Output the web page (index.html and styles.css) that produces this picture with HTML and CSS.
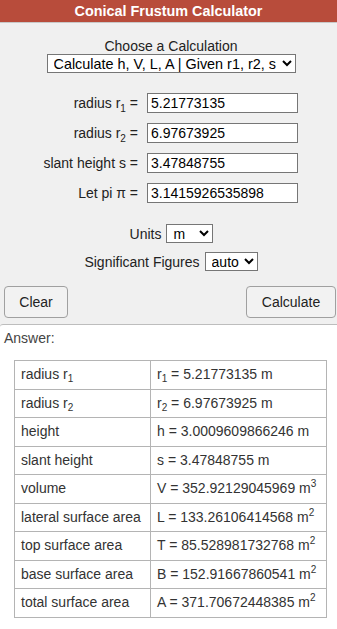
FILE: index.html
```html
<!DOCTYPE html>
<html>
<head>
<meta charset="utf-8">
<link rel="stylesheet" href="styles.css">
</head>
<body>
<div class="header">Conical Frustum Calculator</div>
<div class="form">
  <div class="choose">
    <div class="choose-label">Choose a Calculation</div>
    <select class="calc-select">
      <option>Calculate h, V, L, A | Given r1, r2, s</option>
    </select>
  </div>
  <div class="fields">
    <label class="lbl">radius r<sub>1</sub> =</label>
    <input class="inp" type="text" value="5.21773135">
    <label class="lbl">radius r<sub>2</sub> =</label>
    <input class="inp" type="text" value="6.97673925">
    <label class="lbl">slant height s =</label>
    <input class="inp" type="text" value="3.47848755">
    <label class="lbl">Let pi π =</label>
    <input class="inp" type="text" value="3.1415926535898">
  </div>
  <div class="opt-row units-row">Units <select class="sel-units"><option>m</option></select></div>
  <div class="opt-row sig-row">Significant Figures <select class="sel-sig"><option>auto</option></select></div>
  <div class="buttons">
    <button class="btn btn-clear">Clear</button>
    <button class="btn btn-calc">Calculate</button>
  </div>
</div>
<div class="answer">
  <div class="answer-title">Answer:</div>
  <table class="results">
    <tr><td class="c1">radius r<sub>1</sub></td><td>r<sub>1</sub> = 5.21773135 m</td></tr>
    <tr><td class="c1">radius r<sub>2</sub></td><td>r<sub>2</sub> = 6.97673925 m</td></tr>
    <tr><td class="c1">height</td><td>h = 3.0009609866246 m</td></tr>
    <tr><td class="c1">slant height</td><td>s = 3.47848755 m</td></tr>
    <tr><td class="c1">volume</td><td>V = 352.92129045969 m<sup>3</sup></td></tr>
    <tr><td class="c1">lateral surface area</td><td>L = 133.26106414568 m<sup>2</sup></td></tr>
    <tr><td class="c1">top surface area</td><td>T = 85.528981732768 m<sup>2</sup></td></tr>
    <tr><td class="c1">base surface area</td><td>B = 152.91667860541 m<sup>2</sup></td></tr>
    <tr><td class="c1">total surface area</td><td>A = 371.70672448385 m<sup>2</sup></td></tr>
  </table>
</div>
</body>
</html>
```
FILE: styles.css
```css
html, body {
  margin: 0;
  padding: 0;
}
body {
  background: #f0f0f0;
  font-family: "Liberation Sans", Arial, sans-serif;
  font-size: 14px;
  color: #222;
  width: 337px;
  min-height: 629px;
  display: flex;
  flex-direction: column;
}
.header {
  background: #b84c3b;
  color: #fff;
  font-weight: bold;
  font-size: 14.4px;
  text-align: center;
  height: 22px;
  line-height: 22px;
  border-bottom: 1px solid #c8c8c8;
}
.form {
  padding-top: 15px;
}
.choose {
  display: flex;
  flex-direction: column;
  align-items: center;
  padding-left: 5px;
}
.choose-label {
  line-height: 16px;
}
.calc-select {
  width: 249px;
  height: 19px;
  font-family: "Liberation Sans", Arial, sans-serif;
  font-size: 14.4px;
  color: #000;
  background: #fff;
  border: 1px solid #767676;
  border-radius: 0;
  padding: 0 0 0 2px;
}
.fields {
  display: grid;
  grid-template-columns: 138px 151px;
  column-gap: 9px;
  row-gap: 10px;
  margin-top: 20px;
  align-items: center;
}
.lbl {
  text-align: right;
  line-height: 20px;
  color: #222;
}
.lbl sub {
  font-size: 10px;
  line-height: 0;
}
.inp {
  box-sizing: border-box;
  width: 151px;
  height: 20px;
  font-family: "Liberation Sans", Arial, sans-serif;
  font-size: 14px;
  color: #000;
  border: 1px solid #767676;
  padding: 0 0 0 3px;
  margin: 0;
  background: #fff;
}
.opt-row {
  display: flex;
  justify-content: center;
  align-items: center;
  gap: 5px;
}
.units-row {
  margin-top: 21px;
  padding-left: 6px;
}
.sig-row {
  margin-top: 9px;
  padding-left: 5px;
}
.opt-row select {
  height: 19px;
  font-family: "Liberation Sans", Arial, sans-serif;
  font-size: 14px;
  color: #000;
  background: #fff;
  border: 1px solid #767676;
  border-radius: 0;
  padding: 0 0 0 2px;
}
.sel-units {
  width: 47px;
}
.sel-sig {
  width: 53px;
}
.buttons {
  display: flex;
  justify-content: space-between;
  margin-top: 15px;
  padding: 0 1px 6px 4px;
}
.btn {
  height: 32px;
  font-family: "Liberation Sans", Arial, sans-serif;
  font-size: 14px;
  color: #222;
  background: #f2f2f2;
  border: 1px solid #a0a0a0;
  border-radius: 4px;
  padding: 0;
}
.btn-clear {
  width: 64px;
}
.btn-calc {
  width: 90px;
}
.answer {
  flex: 1;
  background: #fff;
  border-top: 1px solid #bdbdbd;
  border-top-left-radius: 3px;
  padding: 5px 0 12px 0;
}
.answer-title {
  padding-left: 4px;
  color: #444;
  line-height: 16px;
}
.results {
  margin: 14px 0 0 14px;
  border-collapse: collapse;
  width: 313px;
  color: #333;
}
.results td {
  border: 1px solid #b4b4b4;
  padding: 5px 6px 5px 6px;
  line-height: 17.5px;
  white-space: nowrap;
}
.results td.c1 {
  width: 123px;
}
.results sub {
  font-size: 10px;
  line-height: 0;
  vertical-align: -3px;
}
.results sup {
  font-size: 10px;
  line-height: 0;
  vertical-align: 6px;
}
```
